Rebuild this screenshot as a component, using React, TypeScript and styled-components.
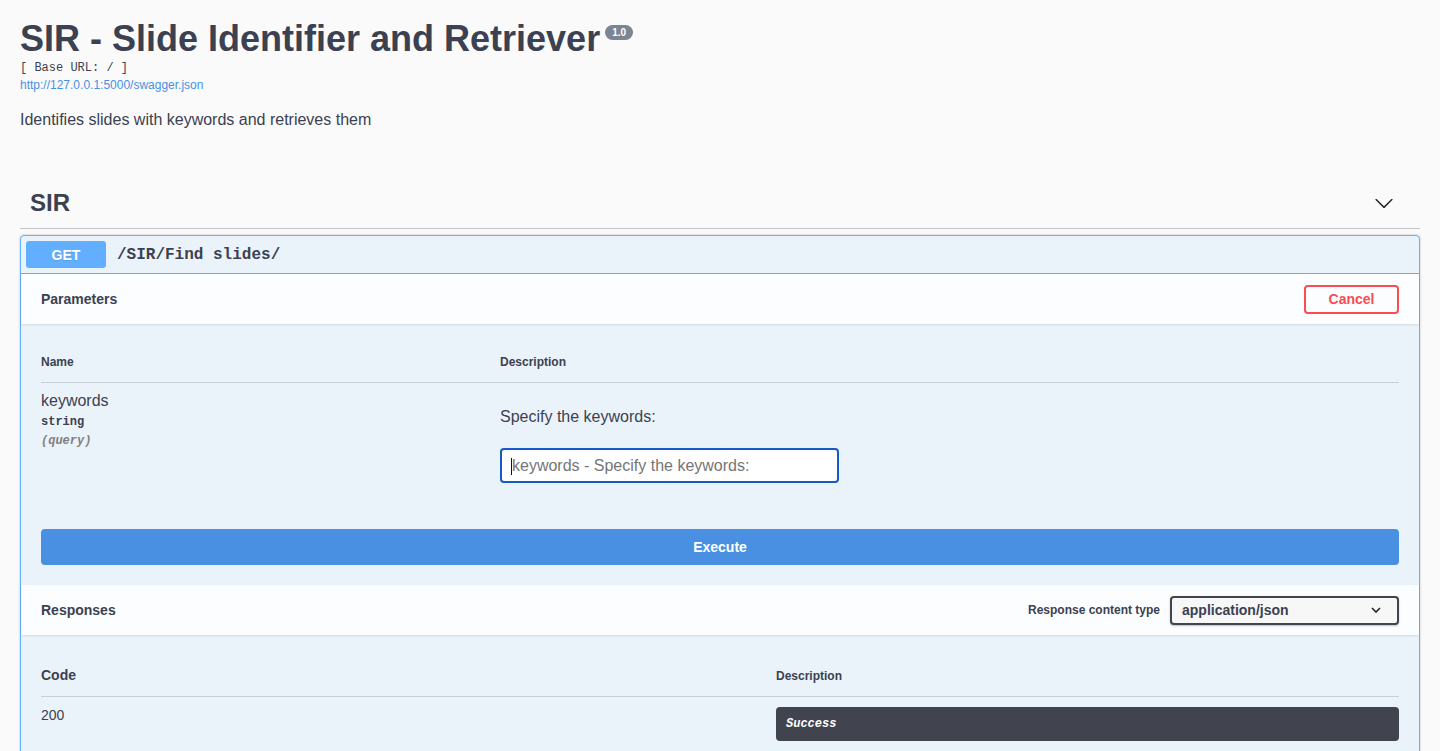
import React from 'react';
import styled, { createGlobalStyle } from 'styled-components';

const GlobalStyle = createGlobalStyle`
  body {
    margin: 0;
    background: #fafafa;
    font-family: "Liberation Sans", Arial, sans-serif;
    color: #3b4151;
  }
  * { box-sizing: border-box; }
`;

const mono = `"Liberation Mono", "Courier New", monospace`;

const Wrapper = styled.div`
  max-width: 1460px;
  margin: 0 auto;
  padding: 0 20px 40px;
`;

const Info = styled.div`
  padding-top: 18px;
`;

const TitleRow = styled.div`
  display: flex;
  align-items: flex-start;
`;

const Title = styled.h2`
  margin: 0;
  font-size: 36px;
  line-height: 41px;
  font-weight: 700;
  color: #3b4151;
`;

const Version = styled.span`
  margin: 7px 0 0 5px;
  padding: 2px 7px;
  font-size: 10px;
  line-height: 11px;
  font-weight: 700;
  color: #fff;
  background: #7d8492;
  border-radius: 57px;
`;

const BaseUrl = styled.pre`
  margin: 1px 0 0;
  font-family: ${mono};
  font-size: 12px;
  line-height: 17px;
  color: #3b4151;
`;

const SpecLink = styled.a`
  display: block;
  font-size: 12px;
  line-height: 16px;
  color: #4990e2;
  text-decoration: none;
`;

const Description = styled.p`
  margin: 16px 0 0;
  font-size: 16px;
  line-height: 22px;
`;

const TagHeading = styled.div`
  display: flex;
  align-items: center;
  justify-content: space-between;
  margin-top: 49px;
  padding: 9px 26px 11px 10px;
  border-bottom: 1px solid rgba(59, 65, 81, 0.3);
`;

const TagName = styled.h3`
  margin: 0;
  font-size: 24px;
  line-height: 28px;
  font-weight: 700;
`;

const OpBlock = styled.div`
  margin-top: 6px;
  border: 1px solid #61affe;
  border-radius: 4px;
  background: #ebf3fa;
  box-shadow: 0 0 3px rgba(0, 0, 0, 0.19);
`;

const Summary = styled.div`
  display: flex;
  align-items: center;
  padding: 5px;
  border-bottom: 1px solid #61affe;
`;

const Method = styled.span`
  display: flex;
  align-items: center;
  justify-content: center;
  min-width: 80px;
  height: 27px;
  background: #61affe;
  color: #fff;
  font-size: 14px;
  font-weight: 700;
  border-radius: 3px;
  text-shadow: 0 1px 0 rgba(0, 0, 0, 0.1);
`;

const Path = styled.span`
  margin-left: 11px;
  font-family: ${mono};
  font-size: 16px;
  font-weight: 700;
  color: #3b4151;
`;

const SectionHeader = styled.div`
  display: flex;
  align-items: center;
  justify-content: space-between;
  min-height: 50px;
  padding: 8px 20px;
  background: rgba(255, 255, 255, 0.8);
  box-shadow: 0 1px 2px rgba(0, 0, 0, 0.1);
`;

const SectionTitle = styled.h4`
  margin: 0;
  font-size: 14px;
  font-weight: 700;
`;

const CancelButton = styled.button`
  width: 95px;
  height: 29px;
  border: 2px solid #f94c54;
  border-radius: 4px;
  background: transparent;
  color: #f94c54;
  font-family: inherit;
  font-size: 14px;
  font-weight: 700;
`;

const SectionBody = styled.div<{ $top: number }>`
  padding: ${p => p.$top}px 20px 20px;
`;

const TableHead = styled.div<{ $first: number }>`
  display: grid;
  grid-template-columns: ${p => p.$first}px 1fr;
  align-items: end;
  padding: 12px 0;
  border-bottom: 1px solid rgba(59, 65, 81, 0.2);
`;

const HeadCell = styled.div<{ $size?: number }>`
  font-size: ${p => p.$size ?? 12}px;
  line-height: ${p => (p.$size ?? 12) + 3}px;
  font-weight: 700;
`;

const TableRow = styled.div<{ $first: number; $top: number }>`
  display: grid;
  grid-template-columns: ${p => p.$first}px 1fr;
  align-items: start;
  padding-top: ${p => p.$top}px;
`;

const ParamName = styled.div`
  font-size: 16px;
  line-height: 20px;
`;

const ParamType = styled.div`
  margin-top: 4px;
  font-family: ${mono};
  font-size: 12px;
  line-height: 15px;
  font-weight: 700;
`;

const ParamIn = styled.div`
  margin-top: 4px;
  font-family: ${mono};
  font-size: 12px;
  line-height: 15px;
  font-weight: 700;
  font-style: italic;
  color: #808080;
`;

const ParamDesc = styled.p`
  margin: 16px 0 0;
  font-size: 16px;
  line-height: 20px;
`;

const InputWrap = styled.div`
  position: relative;
  width: 339px;
  margin-top: 21px;
`;

const TextInput = styled.input`
  display: block;
  width: 100%;
  height: 35px;
  padding: 0 10px;
  border: 2px solid #1558c9;
  border-radius: 4px;
  background: #fff;
  font-family: inherit;
  font-size: 16px;
  color: #3b4151;
  outline: none;
  &::placeholder { color: #767676; }
`;

const Caret = styled.span`
  position: absolute;
  left: 11px;
  top: 10px;
  width: 1px;
  height: 17px;
  background: #111;
`;

const ExecuteButton = styled.button`
  display: block;
  width: 100%;
  height: 36px;
  margin-top: 46px;
  border: none;
  border-radius: 4px;
  background: #4990e2;
  color: #fff;
  font-family: inherit;
  font-size: 14px;
  font-weight: 700;
`;

const ContentType = styled.div`
  display: flex;
  align-items: center;
  gap: 10px;
`;

const ContentLabel = styled.span`
  font-size: 12px;
  font-weight: 700;
`;

const SelectBox = styled.div`
  display: flex;
  align-items: center;
  justify-content: space-between;
  width: 229px;
  height: 29px;
  padding: 0 16px 0 10px;
  border: 2px solid #41444e;
  border-radius: 4px;
  background: #f7f7f7;
  box-shadow: 0 1px 2px rgba(0, 0, 0, 0.25);
  font-size: 14px;
  font-weight: 700;
`;

const Code = styled.div`
  font-size: 14px;
  line-height: 16px;
`;

const SuccessBox = styled.div`
  padding: 10px;
  border-radius: 4px;
  background: #41444e;
  color: #fff;
  font-family: ${mono};
  font-size: 12px;
  line-height: 14px;
  font-weight: 700;
  font-style: italic;
`;

const ArrowDown = () => (
  <svg width="20" height="20" viewBox="0 0 20 20" fill="#222">
    <path d="M17.418 6.109c.272-.268.709-.268.979 0s.271.701 0 .969l-7.908 7.83c-.27.268-.707.268-.979 0l-7.908-7.83c-.27-.268-.27-.701 0-.969.271-.268.709-.268.979 0L10 13.25l7.418-7.141z" />
  </svg>
);

const SmallChevron = () => (
  <svg width="10" height="6" viewBox="0 0 10 6" fill="none" stroke="#222" strokeWidth="1.6">
    <polyline points="1,1 5,5 9,1" />
  </svg>
);

const App: React.FC = () => {
  return (
    <>
      <GlobalStyle />
      <Wrapper>
        <Info>
          <TitleRow>
            <Title>SIR - Slide Identifier and Retriever</Title>
            <Version>1.0</Version>
          </TitleRow>
          <BaseUrl>[ Base URL: / ]</BaseUrl>
          <SpecLink href="#">http://127.0.0.1:5000/swagger.json</SpecLink>
          <Description>Identifies slides with keywords and retrieves them</Description>
        </Info>

        <TagHeading>
          <TagName>SIR</TagName>
          <ArrowDown />
        </TagHeading>

        <OpBlock>
          <Summary>
            <Method>GET</Method>
            <Path>/SIR/Find slides/</Path>
          </Summary>

          <SectionHeader>
            <SectionTitle>Parameters</SectionTitle>
            <CancelButton>Cancel</CancelButton>
          </SectionHeader>

          <SectionBody $top={19}>
            <TableHead $first={459}>
              <HeadCell>Name</HeadCell>
              <HeadCell>Description</HeadCell>
            </TableHead>
            <TableRow $first={459} $top={8}>
              <div>
                <ParamName>keywords</ParamName>
                <ParamType>string</ParamType>
                <ParamIn>(query)</ParamIn>
              </div>
              <div>
                <ParamDesc>Specify the keywords:</ParamDesc>
                <InputWrap>
                  <TextInput placeholder="keywords - Specify the keywords:" />
                  <Caret />
                </InputWrap>
              </div>
            </TableRow>
            <ExecuteButton>Execute</ExecuteButton>
          </SectionBody>

          <SectionHeader>
            <SectionTitle>Responses</SectionTitle>
            <ContentType>
              <ContentLabel>Response content type</ContentLabel>
              <SelectBox>
                <span>application/json</span>
                <SmallChevron />
              </SelectBox>
            </ContentType>
          </SectionHeader>

          <SectionBody $top={20}>
            <TableHead $first={735}>
              <HeadCell $size={14}>Code</HeadCell>
              <HeadCell>Description</HeadCell>
            </TableHead>
            <TableRow $first={735} $top={10}>
              <Code>200</Code>
              <SuccessBox>Success</SuccessBox>
            </TableRow>
          </SectionBody>
        </OpBlock>
      </Wrapper>
    </>
  );
};

export default App;
